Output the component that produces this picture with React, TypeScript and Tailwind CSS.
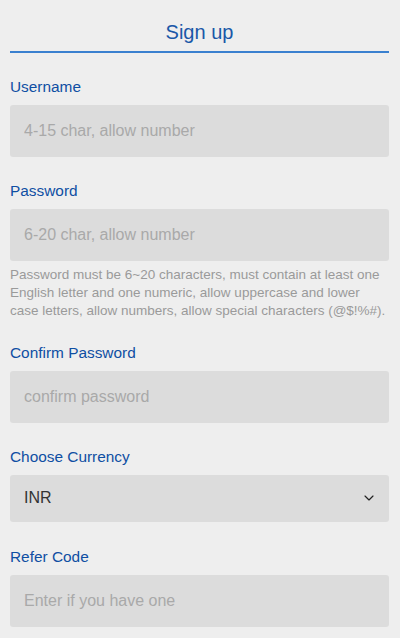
import { ChevronDown } from 'lucide-react';

const field = 'w-full h-[52px] rounded-[3px] bg-[#dcdcdc] px-[14px] text-[16px] text-[#333] placeholder:text-[#a9a9a9] outline-none';

function Label({ children, top }: { children: string; top: string }) {
  return <label className={`block ${top} mb-[8px] h-[20px] leading-[20px] text-[15.4px] text-[#0f4fa3]`}>{children}</label>;
}

export default function App() {
  return (
    <div className="min-h-[638px] bg-[#eeeeee] px-[10px] pr-[11px] font-['Liberation_Sans',Arial,sans-serif]">
      {/* header */}
      <div className="pt-[20px] pb-[7px] text-center text-[20px] leading-[24px] text-[#1a58a8]">Sign up</div>
      <div className="h-[1.5px] bg-[#3a80cf]" />

      <Label top="mt-[24px]">Username</Label>
      <input className={field} placeholder="4-15 char, allow number" />

      <Label top="mt-[24px]">Password</Label>
      <input className={field} type="password" placeholder="6-20 char, allow number" />
      <p className="mt-[5px] text-[13.5px] leading-[18px] text-[#9a9a9a]">
        Password must be 6~20 characters, must contain at least one English letter and one numeric, allow uppercase and lower case letters, allow numbers, allow special characters (@$!%#).
      </p>

      <Label top="mt-[23px]">Confirm Password</Label>
      <input className={`${field} h-[51px]`} type="password" placeholder="confirm password" />

      <Label top="mt-[24px]">Choose Currency</Label>
      <div className="flex h-[47px] items-center justify-between rounded-[3px] bg-[#dcdcdc] px-[14px] text-[16px] text-[#333]">
        <span>INR</span>
        <ChevronDown size={16} strokeWidth={1.75} className="mr-[-2px] text-[#222]" />
      </div>

      <Label top="mt-[25px]">Refer Code</Label>
      <input className={`${field} h-[51px]`} placeholder="Enter if you have one" />
    </div>
  );
}
